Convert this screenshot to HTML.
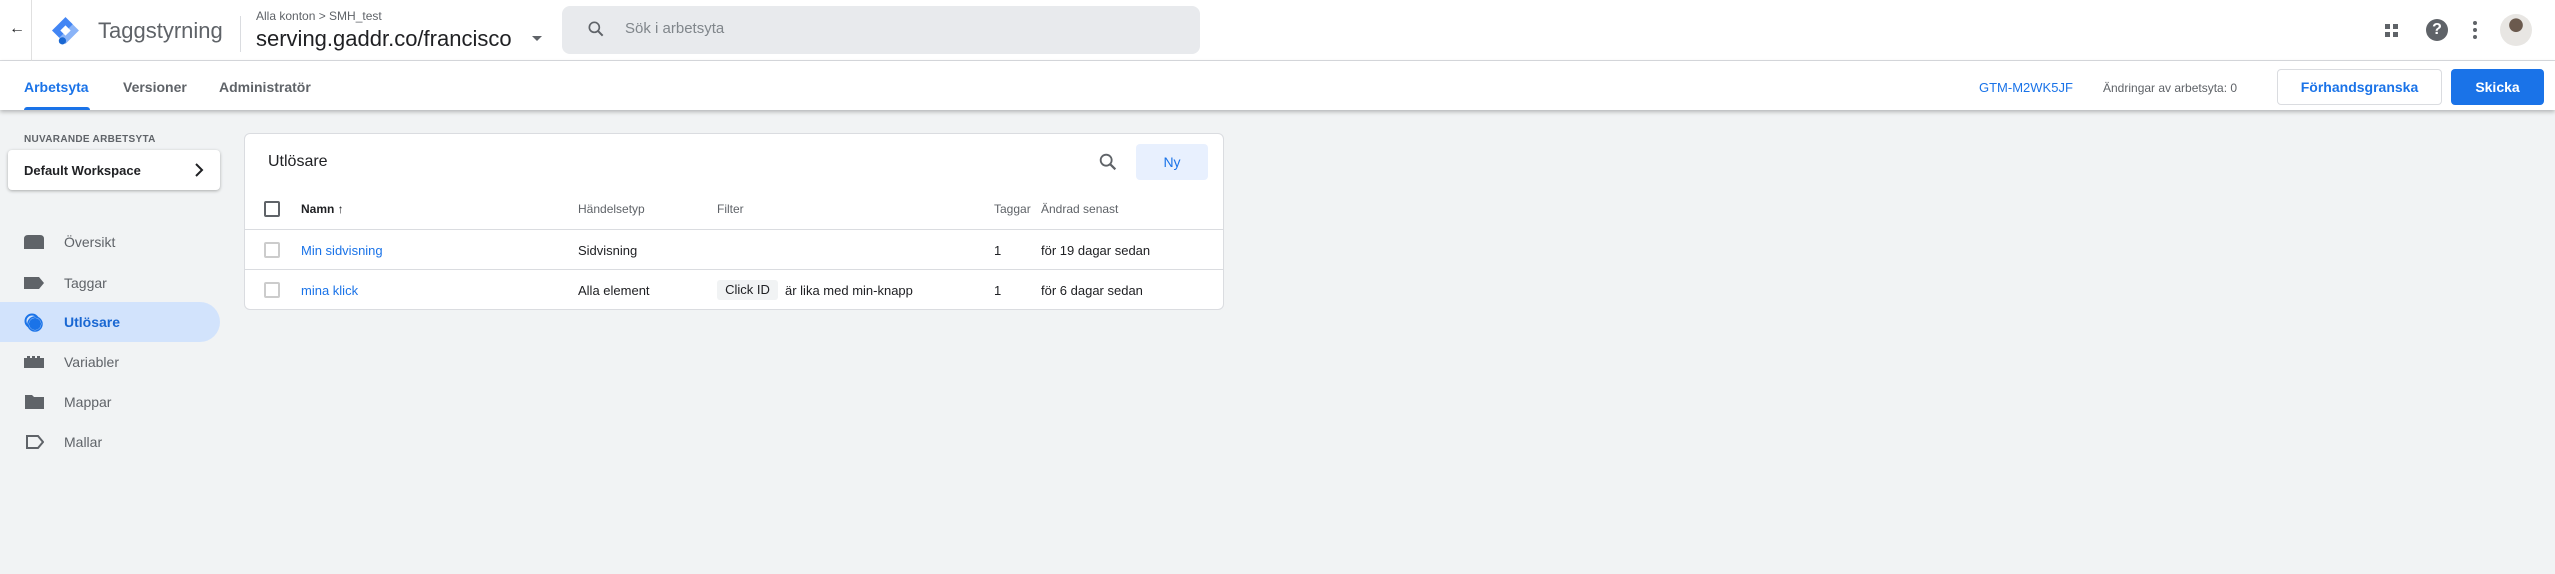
<!DOCTYPE html>
<html><head><meta charset="utf-8"><style>
*{box-sizing:border-box;margin:0;padding:0}
body{width:2555px;height:574px;background:#f1f3f4;font-family:"Liberation Sans",Arial,sans-serif;position:relative;overflow:hidden;color:#202124}
.a{position:absolute}
.top{left:0;top:0;width:2555px;height:61px;background:#fff;border-bottom:1px solid #dadce0}
.tabs{left:0;top:61px;width:2555px;height:49px;background:#fff;box-shadow:0 2px 4px rgba(0,0,0,.25)}
.nav{font-size:14px;color:#5f6368;font-weight:bold}
.th{font-size:12px;color:#5f6368}
.td{font-size:13px;color:#202124}
.lnk{color:#1a73e8}
.cb{width:16px;height:16px;border:2px solid #ccc;border-radius:2px}
</style></head><body>
<div class="a top"></div>
<div class="a" style="left:31px;top:0;width:1px;height:61px;background:#e0e0e0"></div>
<div class="a" style="left:9px;top:20px;font-size:16px;color:#202124">←</div>
<svg class="a" style="left:50px;top:15px" width="31" height="31" viewBox="0 0 30 30"><path d="M15 2 L28 15 L15 28 L2 15 Z" fill="#8ab4f8"/><path d="M15 2 L2 15 L9 22 L22 9 Z" fill="#4285f4"/><path d="M15 10 L20 15 L15 20 L10 15 Z" fill="#fff"/><circle cx="12" cy="25" r="3.5" fill="#1967d2"/></svg>
<div class="a" style="left:98px;top:18px;font-size:22px;color:#5f6368">Taggstyrning</div>
<div class="a" style="left:240px;top:16px;width:1px;height:36px;background:#dadce0"></div>
<div class="a" style="left:256px;top:9px;font-size:12px;color:#5f6368">Alla konton &gt; SMH_test</div>
<div class="a" style="left:256px;top:26px;font-size:22px;color:#202124">serving.gaddr.co/francisco</div>
<div class="a" style="left:532px;top:36px;width:0;height:0;border-left:5px solid transparent;border-right:5px solid transparent;border-top:5px solid #5f6368"></div>
<div class="a" style="left:562px;top:6px;width:638px;height:48px;background:#e8eaed;border-radius:8px"></div>
<svg class="a" style="left:586px;top:19px" width="20" height="20" viewBox="0 0 24 24"><circle cx="10" cy="10" r="6" fill="none" stroke="#5f6368" stroke-width="2"/><path d="M14.5 14.5 L20 20" stroke="#5f6368" stroke-width="2.4"/></svg>
<div class="a" style="left:625px;top:20px;font-size:15px;color:#80868b">Sök i arbetsyta</div>
<svg class="a" style="left:2384px;top:23px" width="16" height="16"><rect x="1" y="1" width="5" height="5" fill="#5f6368"/><rect x="9" y="1" width="5" height="5" fill="#5f6368"/><rect x="1" y="9" width="5" height="5" fill="#5f6368"/><rect x="9" y="9" width="5" height="5" fill="#5f6368"/></svg>
<div class="a" style="left:2426px;top:19px;width:22px;height:22px;border-radius:50%;background:#5f6368;color:#fff;font-weight:bold;font-size:16px;text-align:center;line-height:22px">?</div>
<svg class="a" style="left:2472px;top:20px" width="6" height="20"><circle cx="3" cy="3" r="2" fill="#5f6368"/><circle cx="3" cy="10" r="2" fill="#5f6368"/><circle cx="3" cy="17" r="2" fill="#5f6368"/></svg>
<div class="a" style="left:2500px;top:14px;width:32px;height:32px;border-radius:50%;background:radial-gradient(circle at 50% 35%,#6b5a4e 0 25%,#e8e6e3 27%)"></div>
<div class="a tabs"></div>
<div class="a nav" style="left:24px;top:79px;color:#1a73e8">Arbetsyta</div>
<div class="a" style="left:24px;top:107px;width:66px;height:3px;background:#1a73e8;border-radius:3px 3px 0 0"></div>
<div class="a nav" style="left:123px;top:79px">Versioner</div>
<div class="a nav" style="left:219px;top:79px">Administratör</div>
<div class="a" style="left:1979px;top:80px;font-size:13px;color:#1a73e8">GTM-M2WK5JF</div>
<div class="a" style="left:2103px;top:81px;font-size:12px;color:#5f6368">Ändringar av arbetsyta: 0</div>
<div class="a" style="left:2277px;top:69px;width:165px;height:36px;border:1px solid #dadce0;border-radius:4px;color:#1a73e8;font-size:14px;font-weight:bold;text-align:center;line-height:34px">Förhandsgranska</div>
<div class="a" style="left:2451px;top:69px;width:93px;height:36px;background:#1a73e8;border-radius:4px;color:#fff;font-size:14px;font-weight:bold;text-align:center;line-height:36px">Skicka</div>
<div class="a" style="left:24px;top:134px;font-size:10px;font-weight:bold;color:#5f6368;letter-spacing:.3px">NUVARANDE ARBETSYTA</div>
<div class="a" style="left:8px;top:150px;width:212px;height:40px;background:#fff;border-radius:4px;box-shadow:0 1px 3px rgba(0,0,0,.3)"></div>
<div class="a" style="left:24px;top:163px;font-size:13px;font-weight:bold">Default Workspace</div>
<svg class="a" style="left:194px;top:162px" width="10" height="16"><path d="M2 2 L8 8 L2 14" fill="none" stroke="#202124" stroke-width="2"/></svg>
<div class="a" style="left:0;top:302px;width:220px;height:40px;background:#d2e3fc;border-radius:0 20px 20px 0"></div>
<svg class="a" style="left:24px;top:234px" width="20" height="16"><path d="M0 5 Q0 1 4 1 L16 1 Q20 1 20 5 L20 15 L0 15 Z" fill="#5f6368"/></svg>
<svg class="a" style="left:24px;top:276px" width="20" height="14"><path d="M0 1 L15 1 L20 7 L15 13 L0 13 Z" fill="#5f6368"/></svg>
<svg class="a" style="left:24px;top:313px" width="20" height="20"><circle cx="8" cy="8" r="6.5" fill="none" stroke="#1a73e8" stroke-width="2"/><circle cx="11" cy="11" r="6.5" fill="#1a73e8" stroke="#fff" stroke-width="1"/><circle cx="11" cy="11" r="7" fill="none" stroke="#1a73e8" stroke-width="1.5"/></svg>
<svg class="a" style="left:24px;top:355px" width="20" height="14"><path d="M0 3 L3 3 L3 1 L6 1 L6 3 L8 3 L8 1 L11 1 L11 3 L13 3 L13 1 L16 1 L16 3 L20 3 L20 13 L0 13 Z" fill="#5f6368"/></svg>
<svg class="a" style="left:25px;top:394px" width="19" height="16"><path d="M0 1 L7 1 L9 3 L19 3 L19 15 L0 15 Z" fill="#5f6368"/></svg>
<svg class="a" style="left:26px;top:435px" width="18" height="14"><path d="M1 1 L12 1 L17 7 L12 13 L1 13 Z" fill="none" stroke="#5f6368" stroke-width="2"/></svg>
<div class="a" style="left:64px;top:234px;font-size:14px;color:#5f6368">Översikt</div>
<div class="a" style="left:64px;top:275px;font-size:14px;color:#5f6368">Taggar</div>
<div class="a" style="left:64px;top:314px;font-size:14px;color:#1967d2;font-weight:bold">Utlösare</div>
<div class="a" style="left:64px;top:354px;font-size:14px;color:#5f6368">Variabler</div>
<div class="a" style="left:64px;top:394px;font-size:14px;color:#5f6368">Mappar</div>
<div class="a" style="left:64px;top:434px;font-size:14px;color:#5f6368">Mallar</div>
<div class="a" style="left:244px;top:133px;width:980px;height:177px;background:#fff;border:1px solid #dadce0;border-radius:6px"></div>
<div class="a" style="left:268px;top:153px;font-size:16px">Utlösare</div>
<svg class="a" style="left:1097px;top:151px" width="22" height="22" viewBox="0 0 24 24"><circle cx="10" cy="10" r="6" fill="none" stroke="#5f6368" stroke-width="2"/><path d="M14.5 14.5 L20 20" stroke="#5f6368" stroke-width="2.4"/></svg>
<div class="a" style="left:1136px;top:144px;width:72px;height:36px;background:#e8f0fe;border-radius:4px;color:#1a73e8;font-size:14px;text-align:center;line-height:36px">Ny</div>
<div class="a cb" style="left:264px;top:201px;border-color:#5f6368"></div>
<div class="a th" style="left:301px;top:202px;color:#202124;font-weight:bold">Namn ↑</div>
<div class="a th" style="left:578px;top:202px">Händelsetyp</div>
<div class="a th" style="left:717px;top:202px">Filter</div>
<div class="a th" style="left:994px;top:202px">Taggar</div>
<div class="a th" style="left:1041px;top:202px">Ändrad senast</div>
<div class="a" style="left:245px;top:229px;width:978px;height:1px;background:#dadce0"></div>
<div class="a" style="left:245px;top:269px;width:978px;height:1px;background:#dadce0"></div>
<div class="a cb" style="left:264px;top:242px"></div>
<div class="a td lnk" style="left:301px;top:243px">Min sidvisning</div>
<div class="a td" style="left:578px;top:243px">Sidvisning</div>
<div class="a td" style="left:994px;top:243px">1</div>
<div class="a td" style="left:1041px;top:243px">för 19 dagar sedan</div>
<div class="a cb" style="left:264px;top:282px"></div>
<div class="a td lnk" style="left:301px;top:283px">mina klick</div>
<div class="a td" style="left:578px;top:283px">Alla element</div>
<div class="a td" style="left:717px;top:280px;width:61px;height:20px;background:#f1f3f4;border-radius:3px;text-align:center;line-height:20px">Click ID</div>
<div class="a td" style="left:785px;top:283px">är lika med min-knapp</div>
<div class="a td" style="left:994px;top:283px">1</div>
<div class="a td" style="left:1041px;top:283px">för 6 dagar sedan</div>
</body></html>
